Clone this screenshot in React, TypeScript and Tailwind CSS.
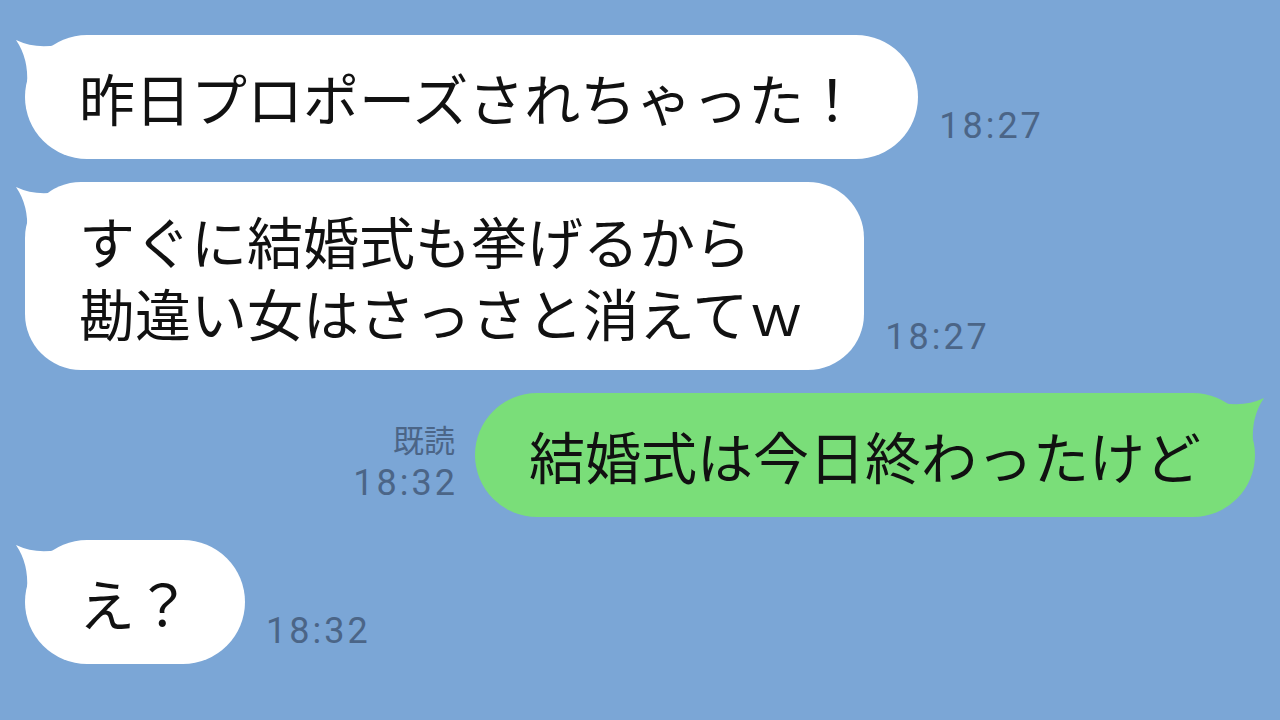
import React from 'react';

const jp = "font-['Noto_Sans_CJK_JP','Noto_Sans',sans-serif]";
const time = "font-['Roboto','Liberation_Sans',sans-serif] text-[36px] leading-none tracking-[3px] text-[#4b6587]";

// bubble tail, drawn at the top-left corner of the bubble
const Tail = ({ color, right }: { color: string; right?: boolean }) => (
  <svg
    width="50"
    height="50"
    viewBox="0 0 50 50"
    className={right ? 'absolute -right-[12px] top-0 -scale-x-100' : 'absolute -left-[12px] top-0'}
  >
    <path d="M3 5 Q 22 14 44 10 L 44 50 L 14 50 Q 16 24 3 5 Z" fill={color} />
  </svg>
);

const Received = ({ lines, time: t, pr, py, radius }: { lines: string[]; time: string; pr: string; py: string; radius: string }) => (
  <div className="flex items-end gap-[21px]">
    <div className={`relative bg-white ${radius} ${py} pl-[54px] ${pr}`}>
      <Tail color="#ffffff" />
      <div className={`relative ${jp} text-[56px] leading-[72px] text-[#111] whitespace-nowrap`}>
        {lines.map((l) => (
          <div key={l}>{l}</div>
        ))}
      </div>
    </div>
    <div className={`${time} mb-[15px]`}>{t}</div>
  </div>
);

export default function App() {
  return (
    <div className="w-[1280px] h-[720px] overflow-hidden bg-[#7ba6d6] flex flex-col gap-[23px] pt-[35px] px-[25px]">
      <Received lines={['昨日プロポーズされちゃった！']} time="18:27" pr="pr-[58px]" py="py-[26px]" radius="rounded-[62px]" />
      <Received
        lines={['すぐに結婚式も挙げるから', '勘違い女はさっさと消えてｗ']}
        time="18:27"
        pr="pr-[60px]"
        py="py-[22px]"
        radius="rounded-[56px]"
      />

      <div className="flex items-end justify-end gap-[17px]">
        <div className="flex flex-col items-end mb-[16px]">
          <div className={`${jp} text-[31px] leading-none text-[#4b6587] mb-[11px] mr-[3px]`}>既読</div>
          <div className={time}>18:32</div>
        </div>
        <div className="relative bg-[#7ade79] rounded-[62px] py-[26px] pl-[54px] pr-[54px]">
          <Tail color="#7ade79" right />
          <div className={`relative ${jp} text-[56px] leading-[72px] text-[#111] whitespace-nowrap`}>
            結婚式は今日終わったけど
          </div>
        </div>
      </div>

      <Received lines={['え？']} time="18:32" pr="pr-[54px]" py="py-[26px]" radius="rounded-[62px]" />
    </div>
  );
}
